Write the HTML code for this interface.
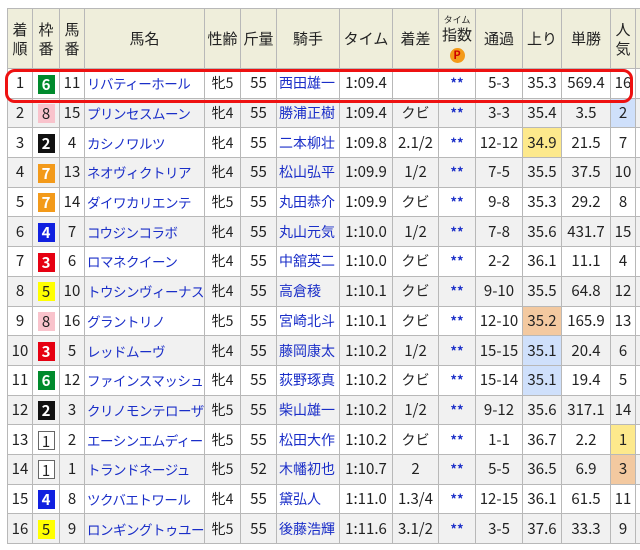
<!DOCTYPE html>
<html><head><meta charset="utf-8"><style>
body{margin:0;background:#fff;width:640px;height:550px;overflow:hidden;position:relative;font-family:"Noto Sans CJK JP",sans-serif;font-size:15px;color:#222}
table{position:absolute;left:7px;top:8px;border-collapse:collapse;table-layout:fixed;width:648px}
td,th{border:1px solid #b8b8b8;padding:0;text-align:center;white-space:nowrap;overflow:hidden;font-weight:normal;vertical-align:middle}
td{line-height:20px}
th{background:#efeedb;height:59px;line-height:19px;font-size:15px}
tr.r td{height:28.7px}
tr.g td{background:#f1f1f1}
td.n{text-align:left;color:#1a2ec8;padding-left:2px;font-size:13.5px;letter-spacing:-0.5px}
td.j{color:#1a2ec8;text-align:left;padding-left:2px;font-size:14px}
td.k{font-size:14px}
td.s{color:#1a2ec8;font-size:13px;font-weight:bold}
.w{display:inline-block;width:17px;height:19px;line-height:19px;font-weight:bold;box-sizing:border-box;vertical-align:middle}
.w1{border:1px solid #666;background:#fff;color:#222;font-weight:normal}
.w2{background:#111;color:#fff}.w3{background:#e60012;color:#fff}.w4{background:#1020e0;color:#fff}
.w5{background:#ffff00;color:#222;font-weight:normal}.w6{background:#008a2c;color:#fff}.w7{background:#f39a1a;color:#fff}.w8{background:#f9c3cc;color:#222;font-weight:normal}
.y{background:#fde98c!important}.o{background:#f3c9a0!important}.b{background:#cfe0fb!important}
.p{display:inline-block;width:15px;height:15px;border-radius:50%;background:#f39a1a;color:#c00;font-size:11px;line-height:15px;font-weight:bold}
#box{position:absolute;left:5px;top:69px;width:622px;height:28px;border:3px solid #ee1111;border-radius:10px}
</style></head><body>
<table>
<colgroup><col style="width:25px"><col style="width:27px"><col style="width:25px"><col style="width:120px"><col style="width:36px"><col style="width:36px"><col style="width:63px"><col style="width:53px"><col style="width:46px"><col style="width:37px"><col style="width:47px"><col style="width:39px"><col style="width:49px"><col style="width:25px"><col style="width:20px"></colgroup>
<tr><th>着<br>順</th><th>枠<br>番</th><th>馬<br>番</th><th>馬名</th><th>性齢</th><th>斤量</th><th>騎手</th><th>タイム</th><th>着差</th><th><span style="font-size:9px;line-height:10px;display:block">タイム</span>指数<br><span class="p">P</span></th><th>通過</th><th>上り</th><th>単勝</th><th>人<br>気</th><th></th></tr>
<tr class="r"><td>1</td><td><span class="w w6">6</span></td><td>11</td><td class="n">リバティーホール</td><td class="k">牝5</td><td>55</td><td class="j">西田雄一</td><td>1:09.4</td><td></td><td class="s">**</td><td>5-3</td><td>35.3</td><td>569.4</td><td>16</td><td></td></tr>
<tr class="r g"><td>2</td><td><span class="w w8">8</span></td><td>15</td><td class="n">プリンセスムーン</td><td class="k">牝4</td><td>55</td><td class="j">勝浦正樹</td><td>1:09.4</td><td class="k">クビ</td><td class="s">**</td><td>3-3</td><td>35.4</td><td>3.5</td><td class="b">2</td><td></td></tr>
<tr class="r"><td>3</td><td><span class="w w2">2</span></td><td>4</td><td class="n">カシノワルツ</td><td class="k">牝4</td><td>55</td><td class="j">二本柳壮</td><td>1:09.8</td><td>2.1/2</td><td class="s">**</td><td>12-12</td><td class="y">34.9</td><td>21.5</td><td>7</td><td></td></tr>
<tr class="r g"><td>4</td><td><span class="w w7">7</span></td><td>13</td><td class="n">ネオヴィクトリア</td><td class="k">牝4</td><td>55</td><td class="j">松山弘平</td><td>1:09.9</td><td>1/2</td><td class="s">**</td><td>7-5</td><td>35.5</td><td>37.5</td><td>10</td><td></td></tr>
<tr class="r"><td>5</td><td><span class="w w7">7</span></td><td>14</td><td class="n">ダイワカリエンテ</td><td class="k">牝5</td><td>55</td><td class="j">丸田恭介</td><td>1:09.9</td><td class="k">クビ</td><td class="s">**</td><td>9-8</td><td>35.3</td><td>29.2</td><td>8</td><td></td></tr>
<tr class="r g"><td>6</td><td><span class="w w4">4</span></td><td>7</td><td class="n">コウジンコラボ</td><td class="k">牝4</td><td>55</td><td class="j">丸山元気</td><td>1:10.0</td><td>1/2</td><td class="s">**</td><td>7-8</td><td>35.6</td><td>431.7</td><td>15</td><td></td></tr>
<tr class="r"><td>7</td><td><span class="w w3">3</span></td><td>6</td><td class="n">ロマネクイーン</td><td class="k">牝4</td><td>55</td><td class="j">中舘英二</td><td>1:10.0</td><td class="k">クビ</td><td class="s">**</td><td>2-2</td><td>36.1</td><td>11.1</td><td>4</td><td></td></tr>
<tr class="r g"><td>8</td><td><span class="w w5">5</span></td><td>10</td><td class="n">トウシンヴィーナス</td><td class="k">牝4</td><td>55</td><td class="j">高倉稜</td><td>1:10.1</td><td class="k">クビ</td><td class="s">**</td><td>9-10</td><td>35.5</td><td>64.8</td><td>12</td><td></td></tr>
<tr class="r"><td>9</td><td><span class="w w8">8</span></td><td>16</td><td class="n">グラントリノ</td><td class="k">牝5</td><td>55</td><td class="j">宮崎北斗</td><td>1:10.1</td><td class="k">クビ</td><td class="s">**</td><td>12-10</td><td class="o">35.2</td><td>165.9</td><td>13</td><td></td></tr>
<tr class="r g"><td>10</td><td><span class="w w3">3</span></td><td>5</td><td class="n">レッドムーヴ</td><td class="k">牝4</td><td>55</td><td class="j">藤岡康太</td><td>1:10.2</td><td>1/2</td><td class="s">**</td><td>15-15</td><td class="b">35.1</td><td>20.4</td><td>6</td><td></td></tr>
<tr class="r"><td>11</td><td><span class="w w6">6</span></td><td>12</td><td class="n">ファインスマッシュ</td><td class="k">牝4</td><td>55</td><td class="j">荻野琢真</td><td>1:10.2</td><td class="k">クビ</td><td class="s">**</td><td>15-14</td><td class="b">35.1</td><td>19.4</td><td>5</td><td></td></tr>
<tr class="r g"><td>12</td><td><span class="w w2">2</span></td><td>3</td><td class="n">クリノモンテローザ</td><td class="k">牝5</td><td>55</td><td class="j">柴山雄一</td><td>1:10.2</td><td>1/2</td><td class="s">**</td><td>9-12</td><td>35.6</td><td>317.1</td><td>14</td><td></td></tr>
<tr class="r"><td>13</td><td><span class="w w1">1</span></td><td>2</td><td class="n">エーシンエムディー</td><td class="k">牝5</td><td>55</td><td class="j">松田大作</td><td>1:10.2</td><td class="k">クビ</td><td class="s">**</td><td>1-1</td><td>36.7</td><td>2.2</td><td class="y">1</td><td></td></tr>
<tr class="r g"><td>14</td><td><span class="w w1">1</span></td><td>1</td><td class="n">トランドネージュ</td><td class="k">牝5</td><td>52</td><td class="j">木幡初也</td><td>1:10.7</td><td>2</td><td class="s">**</td><td>5-5</td><td>36.5</td><td>6.9</td><td class="o">3</td><td></td></tr>
<tr class="r"><td>15</td><td><span class="w w4">4</span></td><td>8</td><td class="n">ツクバエトワール</td><td class="k">牝4</td><td>55</td><td class="j">黛弘人</td><td>1:11.0</td><td>1.3/4</td><td class="s">**</td><td>12-15</td><td>36.1</td><td>61.5</td><td>11</td><td></td></tr>
<tr class="r g"><td>16</td><td><span class="w w5">5</span></td><td>9</td><td class="n">ロンギングトゥユー</td><td class="k">牝5</td><td>55</td><td class="j">後藤浩輝</td><td>1:11.6</td><td>3.1/2</td><td class="s">**</td><td>3-5</td><td>37.6</td><td>33.3</td><td>9</td><td></td></tr>
</table>
<div id="box"></div>
</body></html>
